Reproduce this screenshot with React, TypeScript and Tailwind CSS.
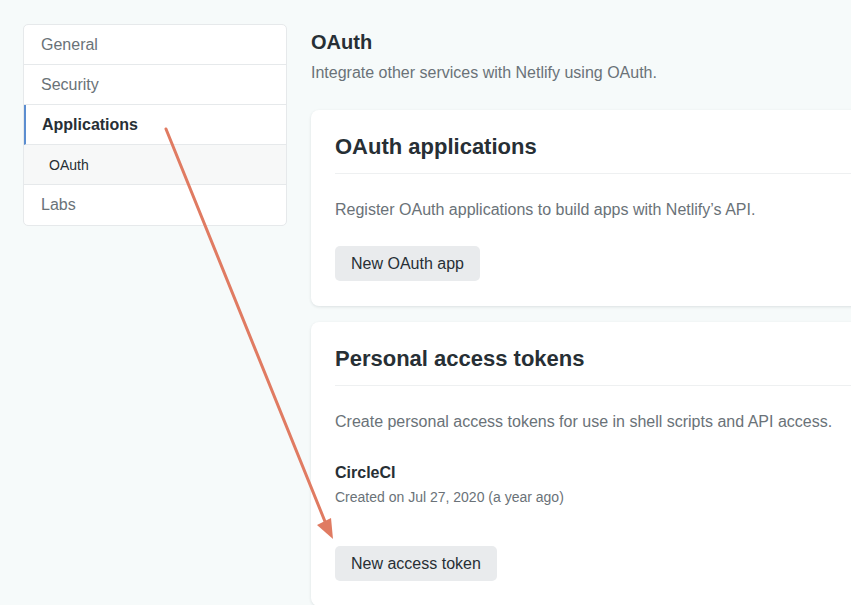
import React from 'react';

const sideItems = [
    { label: 'General' },
    { label: 'Security' },
    { label: 'Applications', active: true },
    { label: 'OAuth', sub: true },
    { label: 'Labs' },
];

const SideNav: React.FC = () => (
    <nav className="w-[264px] shrink-0 self-start rounded-[5px] border border-[#e6e9eb] bg-white overflow-hidden">
        {sideItems.map((item, i) => (
            <div
                key={item.label}
                className={[
                    'h-10 flex items-center',
                    i < sideItems.length - 1 ? 'border-b border-[#e6e9eb]' : '',
                    item.active ? 'border-l-2 border-l-[#5c8ed0] pl-4 font-bold text-[#272f35]' : '',
                    item.sub ? 'bg-[#f7f8f8] pl-[25px] text-sm text-[#272f35]' : '',
                    !item.active && !item.sub ? 'pl-[17px] text-[#6a7278]' : '',
                ].join(' ')}
            >
                {item.label}
            </div>
        ))}
    </nav>
);

const Card: React.FC<{ title: string; children: React.ReactNode }> = ({ title, children }) => (
    <section className="rounded-lg bg-white px-6 pt-6 pb-[25px] shadow-[0_1px_3px_rgba(30,50,60,0.12)]">
        <h2 className="text-[22px] leading-[26px] font-bold text-[#272f35] pb-[13px] border-b border-[#eef0f1]">{title}</h2>
        {children}
    </section>
);

const Button: React.FC<{ children: React.ReactNode }> = ({ children }) => (
    <button className="h-[35px] px-4 rounded-[5px] bg-[#e9ebed] text-[#272f35] text-base">{children}</button>
);

export default function App() {
    return (
        <div
            className="relative w-[851px] h-[605px] overflow-hidden bg-[#f6fafa]"
            style={{ fontFamily: '"Liberation Sans", Arial, sans-serif' }}
        >
            <div className="flex gap-6 pl-[23px] pt-6 w-[1200px]">
                <SideNav />
                <main className="w-[720px] pt-1">
                    <h1 className="text-xl leading-7 font-bold text-[#272f35]">OAuth</h1>
                    <p className="mt-[5px] leading-6 text-[#6a7278]">Integrate other services with Netlify using OAuth.</p>

                    <div className="mt-[25px] flex flex-col gap-4">
                        <Card title="OAuth applications">
                            <p className="mt-6 leading-6 text-[#6a7278]">Register OAuth applications to build apps with Netlify’s API.</p>
                            <div className="mt-6">
                                <Button>New OAuth app</Button>
                            </div>
                        </Card>

                        <Card title="Personal access tokens">
                            <p className="mt-6 leading-6 text-[#6a7278]">Create personal access tokens for use in shell scripts and API access.</p>
                            <div className="mt-[27px] leading-6 font-bold text-[#272f35]">CircleCI</div>
                            <div className="mt-[2px] text-sm leading-5 text-[#6a7278]">Created on Jul 27, 2020 (a year ago)</div>
                            <div className="mt-[39px]">
                                <Button>New access token</Button>
                            </div>
                        </Card>
                    </div>
                </main>
            </div>

            {/* annotation arrow */}
            <svg className="absolute inset-0 pointer-events-none" width="851" height="605">
                <line x1="166" y1="129" x2="326" y2="524" stroke="#e07b62" strokeWidth="3" strokeLinecap="round" />
                <polygon points="317,525 331,518 333,539" fill="#e07b62" />
            </svg>
        </div>
    );
}
